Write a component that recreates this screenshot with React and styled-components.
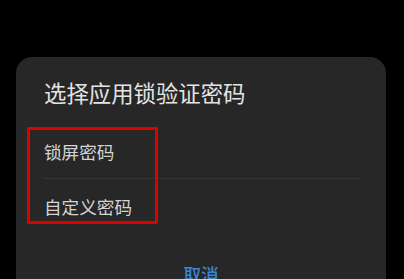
import React from "react";
import styled, { createGlobalStyle } from "styled-components";

const Global = createGlobalStyle`
  html, body {
    margin: 0;
    padding: 0;
    background: #000000;
    overflow: hidden;
  }
  body {
    font-family: "Noto Sans CJK SC", "Noto Sans", sans-serif;
  }
`;

const Screen = styled.div`
  width: 404px;
  height: 279px;
  padding-top: 57px;
  box-sizing: border-box;
  overflow: hidden;
`;

const Dialog = styled.section`
  margin: 0 18px 0 16px;
  background-color: #272727;
  border-radius: 16px 16px 0 0;
  height: 260px;
  display: flex;
  flex-direction: column;
`;

const Title = styled.h2`
  margin: 0;
  padding: 24px 28px 0;
  font-size: 22.4px;
  line-height: 22px;
  font-weight: 400;
  color: #e4e4e4;
`;

const List = styled.div`
  position: relative;
  margin: 21px 27px 0;
`;

const Item = styled.div`
  height: 54px;
  display: flex;
  align-items: center;
  padding-left: 1px;
  font-size: 17.6px;
  color: #d4d4d4;
  border-top: ${p => (p.divided ? "1px solid #353535" : "none")};
`;

const Highlight = styled.div`
  position: absolute;
  left: -16px;
  top: 3px;
  width: 125px;
  height: 91px;
  border: 3px solid #e10000;
  border-radius: 1px;
  pointer-events: none;
`;

const Actions = styled.div`
  display: flex;
  justify-content: center;
  padding-top: 32px;
`;

const CancelButton = styled.button`
  border: none;
  background: none;
  padding: 0;
  font-family: inherit;
  font-size: 17.6px;
  line-height: 18px;
  font-weight: 500;
  color: #3b86d4;
`;

export default function App() {
  return (
    <>
      <Global />
      <Screen>
        <Dialog>
          <Title>选择应用锁验证密码</Title>
          <List>
            <Item>锁屏密码</Item>
            <Item divided>自定义密码</Item>
            <Highlight />
          </List>
          <Actions>
            <CancelButton>取消</CancelButton>
          </Actions>
        </Dialog>
      </Screen>
    </>
  );
}
